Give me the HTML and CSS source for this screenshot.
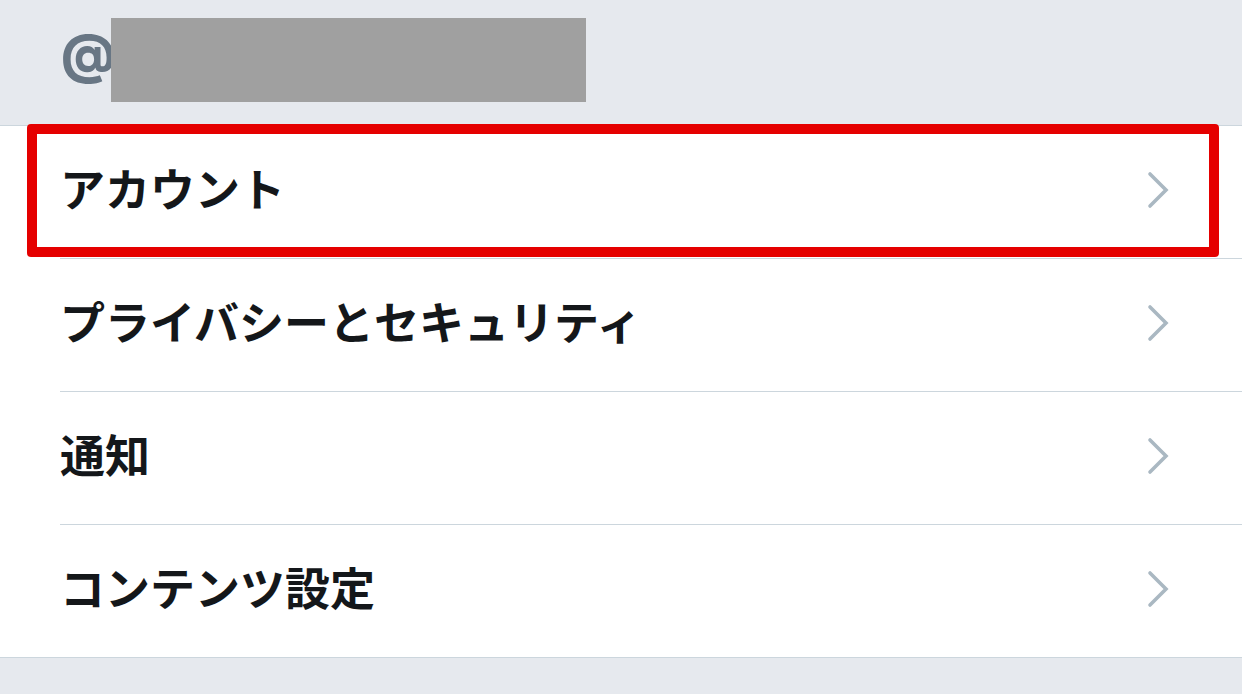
FILE: index.html
```html
<!DOCTYPE html>
<html lang="ja">
<head>
<meta charset="utf-8">
<link rel="stylesheet" href="styles.css">
</head>
<body>
<header class="account-header">
  <span class="at">@</span>
  <span class="redacted"></span>
</header>
<ul class="menu">
  <li class="row"><span class="label">アカウント</span><svg class="chev" viewBox="0 0 24 40"><path d="M4 4 L20 20 L4 36"/></svg></li>
  <li class="row"><span class="label">プライバシーとセキュリティ</span><svg class="chev" viewBox="0 0 24 40"><path d="M4 4 L20 20 L4 36"/></svg></li>
  <li class="row"><span class="label">通知</span><svg class="chev" viewBox="0 0 24 40"><path d="M4 4 L20 20 L4 36"/></svg></li>
  <li class="row"><span class="label">コンテンツ設定</span><svg class="chev" viewBox="0 0 24 40"><path d="M4 4 L20 20 L4 36"/></svg></li>
  <li class="highlight" aria-hidden="true"></li>
</ul>
</body>
</html>
```
FILE: styles.css
```css
* { box-sizing: border-box; }
html, body { margin: 0; padding: 0; }
body {
  background: #e6e9ee;
  font-family: "Noto Sans CJK JP", "Liberation Sans", sans-serif;
  width: 1242px;
  height: 694px;
  overflow: hidden;
}
.account-header {
  height: 126px;
  display: flex;
  align-items: flex-start;
  padding-left: 61px;
  padding-top: 18px;
  border-bottom: 1px solid #ccd6dd;
}
.at {
  font-family: "Inter", "Liberation Sans", sans-serif;
  font-weight: 800;
  font-size: 53px;
  line-height: 72px;
  color: #687684;
  letter-spacing: -5px;
}
.redacted {
  display: block;
  width: 475px;
  height: 84px;
  background: #a0a0a0;
}
.menu {
  list-style: none;
  margin: 0;
  padding: 0;
  background: #fff;
  position: relative;
  border-bottom: 1px solid #ccd6dd;
}
.row {
  height: 133px;
  margin-left: 60px;
  padding-right: 72px;
  display: flex;
  align-items: center;
  justify-content: space-between;
  border-bottom: 1px solid #ccd6dd;
}
.row:nth-last-child(2) { border-bottom: none; height: 132px; }
.label {
  font-size: 45px;
  font-weight: 700;
  color: #14171a;
  line-height: 60px;
  margin-bottom: 8px;
}
.chev {
  width: 24px;
  height: 40px;
  margin-bottom: 4px;
  fill: none;
  stroke: #aab8c2;
  stroke-width: 3.6px;
  stroke-linecap: round;
  stroke-linejoin: miter;
}
.highlight {
  position: absolute;
  left: 27px;
  top: -2px;
  width: 1192px;
  height: 133px;
  border: 10px solid #e50000;
  border-radius: 4px;
}
```
